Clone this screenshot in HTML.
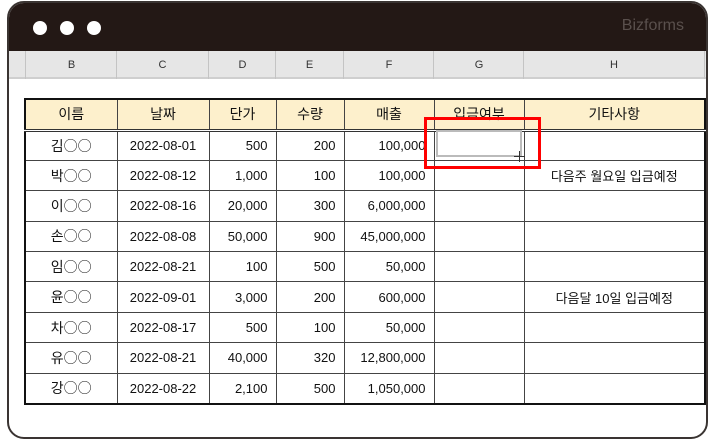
<!DOCTYPE html>
<html><head><meta charset="utf-8"><style>
*{margin:0;padding:0;box-sizing:border-box}
body{width:715px;height:440px;background:#fff;position:relative;overflow:hidden;font-family:"Liberation Sans","Noto Sans CJK KR",sans-serif}
.win{position:absolute;left:7px;top:1px;width:701px;height:438px;border:2px solid #3a3432;border-radius:17px;overflow:hidden;background:#fff}
.bar{position:absolute;left:0;top:0;width:100%;height:48px;background:#231815}
.dot{position:absolute;top:18px;width:14px;height:14px;border-radius:50%;background:#fff}
.brand{position:absolute;right:22px;top:14px;color:#5a504d;font-size:16px}
.cols{position:absolute;left:0;top:48px;width:100%;height:28px;background:#e6e6e6;border-bottom:2px solid #cfcfcf}
.ch{position:absolute;border-left:1px solid #c4c4c4;font-size:11px;color:#333;text-align:center;line-height:28px;top:0;height:28px}
table{position:absolute;left:15px;top:95px;width:680px;table-layout:fixed;border-collapse:collapse;border:2px solid #111;font-size:13px;color:#111}
td{border:1px solid #444;height:30.4px;padding:0 8px;white-space:nowrap;overflow:visible}
tr.h td{background:#fdf0cc;text-align:center;height:31px;font-size:14px;border-bottom:3px double #333}
.c{text-align:center}.r{text-align:right}
.o{font-family:"Noto Sans CJK KR",sans-serif;font-size:14px}
</style></head><body>
<div class="win">
<div class="bar"><div class="dot" style="left:24px"></div><div class="dot" style="left:51px"></div><div class="dot" style="left:78px"></div><div class="brand">Bizforms</div></div>
<div class="cols">
<div class="ch" style="left:16px;width:92px">B</div>
<div class="ch" style="left:107px;width:92px">C</div>
<div class="ch" style="left:199px;width:68px">D</div>
<div class="ch" style="left:266px;width:68px">E</div>
<div class="ch" style="left:334px;width:91px">F</div>
<div class="ch" style="left:424px;width:91px">G</div>
<div class="ch" style="left:514px;width:182px;border-right:1px solid #c4c4c4">H</div>
</div>
<table>
<colgroup><col style="width:92px"><col style="width:92px"><col style="width:67px"><col style="width:68px"><col style="width:90px"><col style="width:90px"><col style="width:181px"></colgroup>
<tr class="h"><td>이름</td><td>날짜</td><td>단가</td><td>수량</td><td>매출</td><td>입금여부</td><td>기타사항</td></tr>
<tr><td class="c o">김○○</td><td class="c">2022-08-01</td><td class="r">500</td><td class="r">200</td><td class="r">100,000</td><td></td><td></td></tr>
<tr><td class="c o">박○○</td><td class="c">2022-08-12</td><td class="r">1,000</td><td class="r">100</td><td class="r">100,000</td><td></td><td class="c">다음주 월요일 입금예정</td></tr>
<tr><td class="c o">이○○</td><td class="c">2022-08-16</td><td class="r">20,000</td><td class="r">300</td><td class="r">6,000,000</td><td></td><td></td></tr>
<tr><td class="c o">손○○</td><td class="c">2022-08-08</td><td class="r">50,000</td><td class="r">900</td><td class="r">45,000,000</td><td></td><td></td></tr>
<tr><td class="c o">임○○</td><td class="c">2022-08-21</td><td class="r">100</td><td class="r">500</td><td class="r">50,000</td><td></td><td></td></tr>
<tr><td class="c o">윤○○</td><td class="c">2022-09-01</td><td class="r">3,000</td><td class="r">200</td><td class="r">600,000</td><td></td><td class="c">다음달 10일 입금예정</td></tr>
<tr><td class="c o">차○○</td><td class="c">2022-08-17</td><td class="r">500</td><td class="r">100</td><td class="r">50,000</td><td></td><td></td></tr>
<tr><td class="c o">유○○</td><td class="c">2022-08-21</td><td class="r">40,000</td><td class="r">320</td><td class="r">12,800,000</td><td></td><td></td></tr>
<tr><td class="c o">강○○</td><td class="c">2022-08-22</td><td class="r">2,100</td><td class="r">500</td><td class="r">1,050,000</td><td></td><td></td></tr>
</table>
</div>
<div style="position:absolute;left:436px;top:130px;width:86px;height:27px;border:2px solid #bbb;background:#fff"></div>
<div style="position:absolute;left:514px;top:156px;width:11px;height:1px;background:#333"></div>
<div style="position:absolute;left:519px;top:151px;width:1px;height:11px;background:#333"></div>
<div style="position:absolute;left:424px;top:117px;width:117px;height:52px;border:3px solid #f00"></div>
</body></html>
